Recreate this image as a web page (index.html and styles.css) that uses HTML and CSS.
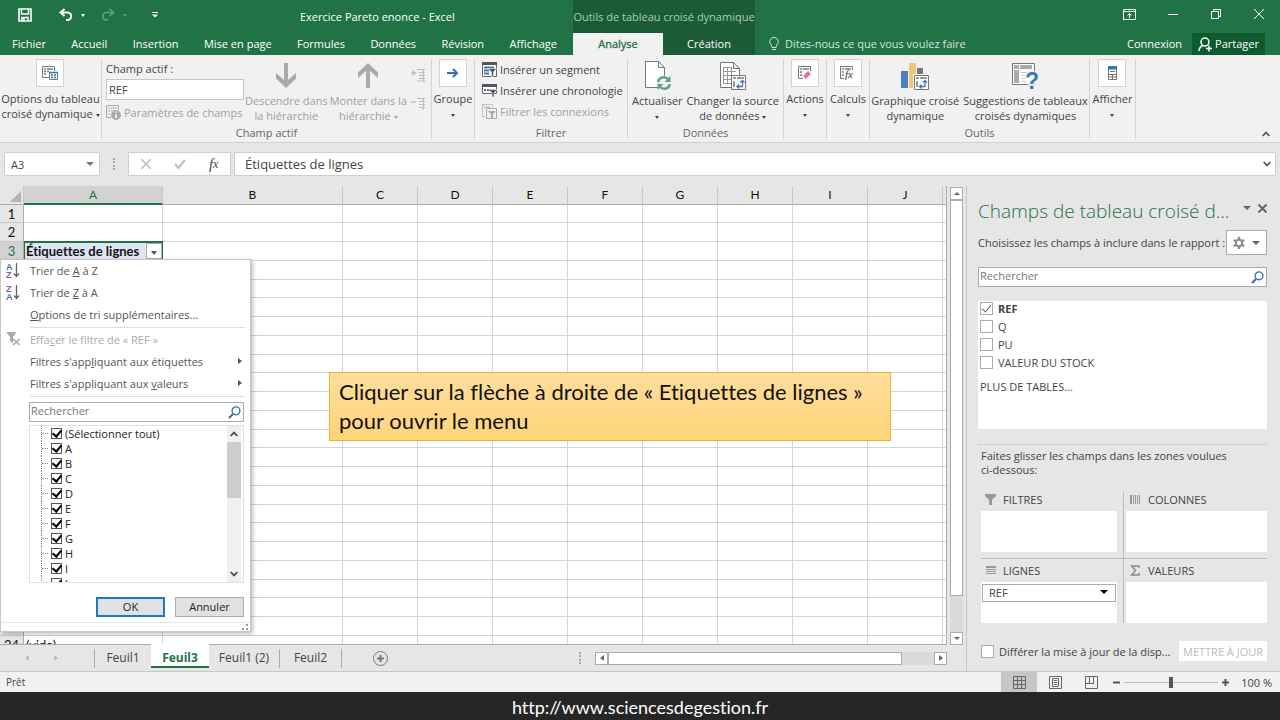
FILE: index.html
```html
<!DOCTYPE html>
<html lang="fr">
<head>
    <meta charset="UTF-8">
    <meta name="viewport" content="width=device-width, initial-scale=1.0">
    <title>Exercice Pareto enonce - Excel</title>
    <link rel="stylesheet" href="styles.css">
</head>
<body>
    <header class="top">
        <div class="titlebar">
            <div class="quick">
                <button class="plain" aria-label="Enregistrer">
                    <svg width="14" height="14" viewBox="0 0 14 14" fill="none" stroke="#fff" stroke-width="1.6"><path d="M1 1h12v12H1zM3.500 1v5h7V1M4 13V9.500h6V13M6 10v3"/></svg>
                </button>
                <button class="plain undo" aria-label="Annuler">
                    <svg width="14" height="14" viewBox="0 0 14 14" fill="none" stroke="#fff" stroke-width="2"><path d="M5.500 1L1.500 4.500l4 3.500M2 4.500h6.500c5 0 5 7.500-.5 7.500H7"/></svg>
                    <i class="caret"></i>
                </button>
                <button class="plain redo" aria-label="Rétablir">
                    <svg width="14" height="14" viewBox="0 0 14 14" fill="none" stroke="#fff" stroke-width="1.6"><path d="M8.500 1l4 3.500-4 3.500M12 4.500H5.500c-5 0-5 7.500.5 7.500H7"/></svg>
                    <i class="caret"></i>
                </button>
                <button class="plain more" aria-label="Personnaliser">
                    <svg width="6" height="6" viewBox="0 0 6 6" fill="#fff"><path d="M0 0h6v1H0zM0 2.500h6L3 5.500z"/></svg>
                </button>
            </div>
            <div class="doc-title">Exercice Pareto enonce - Excel</div>
            <div class="context-title">Outils de tableau croisé dynamique</div>
            <div class="window-buttons">
                <button class="plain" aria-label="Options du ruban">
                    <svg width="13" height="11" viewBox="0 0 13 11" fill="none" stroke="#fff"><path d="M.5.500h12v10H.5zM.5 2.500h12M6.500 9V4.500M4.500 6.500l2-2 2 2"/></svg>
                </button>
                <button class="plain" aria-label="Réduire">
                    <svg width="10" height="10" viewBox="0 0 10 10" stroke="#fff"><path d="M0 5.500h10"/></svg>
                </button>
                <button class="plain" aria-label="Niveau inférieur">
                    <svg width="10" height="10" viewBox="0 0 10 10" fill="none" stroke="#fff"><path d="M.5 2.500h7v7h-7zM2.500 2.500v-2h7v7h-2"/></svg>
                </button>
                <button class="plain" aria-label="Fermer">
                    <svg width="10" height="10" viewBox="0 0 10 10" stroke="#fff"><path d="M0 0l10 10M10 0L0 10"/></svg>
                </button>
            </div>
        </div>
        <nav class="tabs">
            <div class="main-tabs">
                <a href="#">Fichier</a>
                <a href="#">Accueil</a>
                <a href="#">Insertion</a>
                <a href="#">Mise en page</a>
                <a href="#">Formules</a>
                <a href="#">Données</a>
                <a href="#">Révision</a>
                <a href="#">Affichage</a>
            </div>
            <a class="context active" href="#">Analyse</a>
            <a class="context" href="#">Création</a>
            <a class="tell-me" href="#">
                <svg width="10" height="14" viewBox="0 0 10 14" fill="none" stroke="#d3e5da"><path d="M3 10.500C3 8 .8 7.500.8 4.700a4.200 4.200 0 0 1 8.400 0C9.200 7.500 7 8 7 10.500zM3 12.500h4"/></svg>
                Dites-nous ce que vous voulez faire
            </a>
            <a class="login" href="#">Connexion</a>
            <button class="share">
                <svg width="14" height="15" viewBox="0 0 14 15" fill="none" stroke="#fff" stroke-width="1.500"><circle cx="7" cy="5" r="4"/><path d="M1 14c0-3 1.500-4.500 4-5.500M8 11.500h6M11 8.500v6"/></svg>
                Partager
            </button>
        </nav>
    </header>

    <section class="ribbon">
        <div class="group g-options">
            <button class="big">
                <span class="boxed"><svg width="16" height="16" viewBox="0 0 16 16" fill="none" stroke="#777"><path d="M7 12.500H.5v-11h12V6"/><path d="M2 4h2M5 4h6M2 6.500h2M2 9h2M5 6.500h2" stroke-width="1.500"/><path fill="#fff" d="M7.500 7.500h8v7h-8z"/><path stroke="#2e75b6" d="M7 7.500h9M9 10h2M12 10h2M9 12.500h2M12 12.500h2" stroke-width="1.400"/></svg></span>
                <span>Options du tableau<br>croisé dynamique <i class="caret"></i></span>
            </button>
        </div>
        <div class="group g-field">
            <div class="group-body">
                <div class="field-form">
                    <label for="champ">Champ actif :</label>
                    <input id="champ" type="text" value="REF">
                    <button class="small" disabled>
                        <svg width="15" height="15" viewBox="0 0 15 15" fill="none" stroke="#aaa"><path d="M5 12.500H.5V.5h12V5M2 3h2M5 3h6M2 6h2M2 9h2M5 6h2"/><circle cx="10" cy="10" r="4.500" fill="#aaa"/><path stroke="#fff" stroke-width="1.500" d="M10 9v4M10 6.500v1.300"/></svg>
                        Paramètres de champs
                    </button>
                </div>
                <button class="big arrow" disabled>
                    <svg width="20" height="26" viewBox="0 0 20 26" fill="#aaa"><path d="M8 0h4v17l8-7v5.500L10 25 0 15.500V10l8 7z"/></svg>
                    <span>Descendre dans<br>la hiérarchie</span>
                </button>
                <button class="big arrow" disabled>
                    <svg width="20" height="26" viewBox="0 0 20 26" fill="#aaa"><path d="M8 25h4V8l8 7V9.500L10 0 0 9.500V15l8-7z"/></svg>
                    <span>Monter dans la<br>hiérarchie <i class="caret"></i></span>
                </button>
                <div class="expand">
                    <button class="plain" disabled aria-label="Développer"><svg width="14" height="14" viewBox="0 0 14 14" fill="none" stroke="#bbb"><path d="M0 5h5M2.500 2.500v5" stroke-width="1.500"/><path d="M6 1.500h8M8 4.500h6M8 7.500h6M8 10.500h6M6 13h8M12.500 2v11"/></svg></button>
                    <button class="plain" disabled aria-label="Réduire le champ"><svg width="14" height="14" viewBox="0 0 14 14" fill="none" stroke="#bbb"><path d="M0 5h5" stroke-width="1.500"/><path d="M6 1.500h8M8 4.500h6M8 7.500h6M8 10.500h6M12.500 2v11"/></svg></button>
                </div>
            </div>
            <h2>Champ actif</h2>
        </div>
        <div class="group g-narrow">
            <button class="big">
                <span class="boxed"><svg width="12" height="10" viewBox="0 0 12 10" fill="none" stroke="#2e6fba" stroke-width="2"><path d="M0 5h10M6 1l4 4-4 4"/></svg></span>
                <span>Groupe<br><i class="caret"></i></span>
            </button>
        </div>
        <div class="group g-filter">
            <div class="group-body stack">
                <button class="small">
                    <svg width="15" height="15" viewBox="0 0 15 15" fill="none"><path stroke="#666" fill="#fff" d="M.5.500h14v14H.5z"/><path fill="#555" d="M0 0h15v3H0z"/><path stroke="#3f76b5" stroke-width="2" d="M2 5.500h10M2 8.500h5M2 11.500h5"/><path fill="#555" stroke="#fff" stroke-width=".5" d="M6 6.500h8.500L11.500 10v4.500h-2V10z"/></svg>
                    Insérer un segment
                </button>
                <button class="small">
                    <svg width="15" height="15" viewBox="0 0 15 15" fill="none"><path stroke="#666" fill="#fff" d="M.5 2.500h14v8H.5z"/><path fill="#555" d="M0 1h15v3H0z"/><path stroke="#3f76b5" stroke-width="2" d="M2 7h2M5 7h4"/><path fill="#555" stroke="#fff" stroke-width=".5" d="M7 6.500h8L12 10v4h-2v-4z"/></svg>
                    Insérer une chronologie
                </button>
                <button class="small" disabled>
                    <svg width="15" height="15" viewBox="0 0 15 15" fill="none" stroke="#aaa"><path d="M.5.500h10v3M.5.500v12h3" stroke-dasharray="2 1"/><path d="M4.500 4.500h10v10h-10zM2 3h6"/><path fill="#aaa" stroke="none" d="M6 7h8l-3 3v4H9v-4z"/></svg>
                    Filtrer les connexions
                </button>
            </div>
            <h2>Filtrer</h2>
        </div>
        <div class="group g-data">
            <div class="group-body">
                <button class="big tall">
                    <svg width="28" height="30" viewBox="0 0 28 30" fill="none"><path fill="#fff" stroke="#777" d="M2.500.500h13l6 6v20h-19zM15.500.500v6h6"/><circle cx="21" cy="22" r="7.500" fill="#f1f1f1"/><path stroke="#5fa283" stroke-width="2.400" d="M15 21c1-5 7-6.500 10.500-2.500M27 23c-1 5-7 6.500-10.500 2.500"/><path fill="#5fa283" d="M27.500 15v6h-6zM14.500 29v-6h6z"/></svg>
                    <span>Actualiser<br><i class="caret"></i></span>
                </button>
                <button class="big tall">
                    <svg width="28" height="30" viewBox="0 0 28 30" fill="none"><path fill="#fff" stroke="#777" d="M1.500 1.500h13l6 6v19h-19zM14.500 1.500v6h6"/><path stroke="#999" d="M4.500 6v17M8.500 6v17M12.500 6v17M4 6.500h9M4 10.500h13M4 14.500h13M4 18.500h9M4 22.500h9"/><path fill="#fff" stroke="#777" d="M12.500 14.500h14v14h-14z"/><path stroke="#999" stroke-width="2" d="M14 17h3M18 17h7M15 20v6"/><path stroke="#3d78bd" stroke-width="1.300" d="M18.500 25.500h5v-6M21 21.500l2.500-2 2 2M20 23.500l-2 2 2 2"/></svg>
                    <span>Changer la source<br>de données <i class="caret"></i></span>
                </button>
            </div>
            <h2>Données</h2>
        </div>
        <div class="group g-narrow">
            <button class="big">
                <span class="boxed"><svg width="14" height="14" viewBox="0 0 14 14" fill="none" stroke="#777"><path d="M5 12.500H.5V.5h12V5"/><path d="M2 3h2M5 3h6M2 6h2M2 9h2" stroke-width="1.500"/><path stroke="#e8718d" stroke-width="4" d="M6.500 11.500l5-5"/></svg></span>
                <span>Actions<br><i class="caret"></i></span>
            </button>
        </div>
        <div class="group g-narrow">
            <button class="big">
                <span class="boxed"><svg class="icon-fx" width="15" height="17" viewBox="0 0 15 17" fill="none" stroke="#777"><path d="M4 13.500H.5v-12h12V5"/><path d="M2 4h2M5 4h6M2 7h2M2 10h2" stroke-width="1.500"/><text x="5" y="13">fx</text></svg></span>
                <span>Calculs<br><i class="caret"></i></span>
            </button>
        </div>
        <div class="group g-tools">
            <div class="group-body">
                <button class="big tall">
                    <svg width="30" height="30" viewBox="0 0 30 30" fill="none"><path fill="#4a80bd" d="M1 10h7v17H1z"/><path fill="#edc67a" d="M9 2h7v25H9z"/><path fill="#777" d="M17 7h6v20h-6z"/><path fill="#fff" stroke="#f1f1f1" stroke-width="3" d="M14.500 14.500h14v14h-14z"/><path fill="#fff" stroke="#777" d="M14.500 14.500h14v14h-14z"/><path stroke="#999" stroke-width="2" d="M16 17h3M20 17h7M17 20v6"/><path stroke="#3d78bd" stroke-width="1.300" d="M20 25.500h5v-6M22.500 21.500l2.500-2 2 2M21.500 23.500l-2 2 2 2"/></svg>
                    <span>Graphique croisé<br>dynamique</span>
                </button>
                <button class="big tall">
                    <svg class="icon-help" width="28" height="30" viewBox="0 0 28 30" fill="none"><path fill="#fff" stroke="#777" d="M1.500 2.500h22v21h-22z"/><path fill="#aaa" d="M3 4h5v4H3zM9 4h12v4H9zM3 9h5v13H3z"/><path stroke="#ccc" d="M10 11.500h11M10 14.500h6M10 17.500h6M10 20.500h6"/><text x="14" y="28">?</text></svg>
                    <span>Suggestions de tableaux<br>croisés dynamiques</span>
                </button>
            </div>
            <h2>Outils</h2>
        </div>
        <div class="group g-narrow g-show">
            <button class="big">
                <span class="boxed"><svg width="9" height="14" viewBox="0 0 9 14" fill="none" stroke="#777"><path fill="#fff" d="M.5.500h8v13h-8zM.5 8.500h8M4.500 8v5M1 11h7M2 5.500h5"/><path fill="#2e75b6" stroke="none" d="M0 0h9v3.500H0z"/></svg></span>
                <span>Afficher<br><i class="caret"></i></span>
            </button>
        </div>
        <button class="plain collapse" aria-label="Réduire le ruban">
            <svg width="8" height="6" viewBox="0 0 8 6" fill="none" stroke="#555" stroke-width="1.800"><path d="M.7 5L4 1.500 7.300 5"/></svg>
        </button>
    </section>

    <section class="formula-bar">
        <div class="name-box">
            <input type="text" value="A3" aria-label="Zone Nom">
            <i class="caret large"></i>
        </div>
        <span class="grip"></span>
        <div class="formula-buttons">
            <button class="plain" aria-label="Annuler la saisie"><svg width="10" height="10" viewBox="0 0 10 10" stroke="#bbb" stroke-width="1.500"><path d="M0 0l10 10M10 0L0 10"/></svg></button>
            <button class="plain" aria-label="Entrer"><svg width="12" height="10" viewBox="0 0 12 10" fill="none" stroke="#bbb" stroke-width="2"><path d="M1 5l3.500 4L11 1"/></svg></button>
            <button class="plain fx"><i>f</i>x</button>
        </div>
        <div class="formula-input">
            <input type="text" value="Étiquettes de lignes" aria-label="Barre de formule">
            <svg width="8" height="6" viewBox="0 0 8 6" fill="none" stroke="#555" stroke-width="1.800"><path d="M.7 1L4 4.500 7.300 1"/></svg>
        </div>
    </section>

    <main class="workspace">
        <section class="book">
            <div class="sheet-area">
                <div class="sheet">
                    <table>
                        <colgroup>
                            <col class="col-head"><col class="col-a"><col class="col-b">
                            <col span="9" class="col-std">
                        </colgroup>
                        <thead>
                            <tr>
                                <th class="corner"><svg width="11" height="11" viewBox="0 0 11 11" fill="#b5b5b5"><path d="M11 0v11H0z"/></svg></th>
                                <th class="selected">A</th><th>B</th><th>C</th><th>D</th><th>E</th><th>F</th><th>G</th><th>H</th><th>I</th><th>J</th><th></th>
                            </tr>
                        </thead>
                        <tbody id="rows"></tbody>
                    </table>
                </div>
                <div class="vscroll">
                    <button class="scroll-btn" aria-label="Haut"><i class="caret up"></i></button>
                    <div class="thumb"></div>
                    <div class="track"></div>
                    <button class="scroll-btn" aria-label="Bas"><i class="caret"></i></button>
                </div>
            </div>
            <div class="sheet-tabs">
                <div class="sheet-nav">
                    <i class="caret left"></i>
                    <i class="caret right"></i>
                </div>
                <a href="#">Feuil1</a>
                <a class="active" href="#">Feuil3</a>
                <a class="ruled" href="#">Feuil1 (2)</a>
                <a class="ruled" href="#">Feuil2</a>
                <button class="plain add" aria-label="Nouvelle feuille">
                    <svg width="15" height="15" viewBox="0 0 15 15" fill="none" stroke="#777"><circle cx="7.500" cy="7.500" r="7"/><path stroke-width="2" d="M7.500 4v7M4 7.500h7"/></svg>
                </button>
                <span class="grip"></span>
                <div class="hscroll">
                    <button class="scroll-btn" aria-label="Gauche"><i class="caret left"></i></button>
                    <div class="thumb"></div>
                    <div class="track"></div>
                    <button class="scroll-btn" aria-label="Droite"><i class="caret right"></i></button>
                </div>
            </div>

            <div class="filter-menu">
                <button class="item">
                    <svg width="14" height="17" viewBox="0 0 14 17" fill="none"><text class="az-a" x="0" y="8">A</text><text class="az-z" x="0" y="16">Z</text><path stroke="#666" stroke-width="1.300" d="M10.500 1v13M8 11.500l2.500 3 2.500-3"/></svg>
                    <span>Trier de <u>A</u> à Z</span>
                </button>
                <button class="item">
                    <svg width="14" height="17" viewBox="0 0 14 17" fill="none"><text class="az-z" x="0" y="8">Z</text><text class="az-a" x="0" y="16">A</text><path stroke="#666" stroke-width="1.300" d="M10.500 1v13M8 11.500l2.500 3 2.500-3"/></svg>
                    <span>Trier de <u>Z</u> à A</span>
                </button>
                <button class="item"><span><u>O</u>ptions de tri supplémentaires...</span></button>
                <hr>
                <button class="item" disabled>
                    <svg width="14" height="14" viewBox="0 0 14 14" fill="#aaa"><path d="M0 0h10.500L7 5v6L4 9V5z"/><path stroke="#aaa" stroke-width="1.600" d="M7 7l6.500 6M13.500 7L7 13"/></svg>
                    <span>Effa<u>c</u>er le filtre de « REF »</span>
                </button>
                <button class="item"><span>Filtres s'app<u>l</u>iquant aux étiquettes</span><i class="caret right"></i></button>
                <button class="item"><span>Filtres s'appliquant aux <u>v</u>aleurs</span><i class="caret right"></i></button>
                <hr>
                <div class="search">
                    <input type="text" placeholder="Rechercher" aria-label="Rechercher un élément">
                    <svg width="13" height="13" viewBox="0 0 13 13" fill="none" stroke="#3c72b3"><circle cx="8" cy="4.800" r="3.900" stroke-width="1.400"/><path stroke-width="2.200" d="M5 8l-4 4"/></svg>
                </div>
                <div class="tree">
                    <div class="tree-items">
                        <label><input type="checkbox" checked>(Sélectionner tout)</label>
                        <label><input type="checkbox" checked>A</label>
                        <label><input type="checkbox" checked>B</label>
                        <label><input type="checkbox" checked>C</label>
                        <label><input type="checkbox" checked>D</label>
                        <label><input type="checkbox" checked>E</label>
                        <label><input type="checkbox" checked>F</label>
                        <label><input type="checkbox" checked>G</label>
                        <label><input type="checkbox" checked>H</label>
                        <label><input type="checkbox" checked>I</label>
                        <label><input type="checkbox" checked>J</label>
                    </div>
                    <div class="tree-scroll">
                        <svg width="8" height="6" viewBox="0 0 8 6" fill="none" stroke="#444" stroke-width="1.800"><path d="M.7 5L4 1.500 7.300 5"/></svg>
                        <div class="tree-thumb"></div>
                        <svg width="8" height="6" viewBox="0 0 8 6" fill="none" stroke="#444" stroke-width="1.800"><path d="M.7 1L4 4.500 7.300 1"/></svg>
                    </div>
                </div>
                <div class="menu-buttons">
                    <button class="ok">OK</button>
                    <button>Annuler</button>
                </div>
                <div class="resize">
                    <svg width="6" height="6" viewBox="0 0 6 6" fill="#999"><path d="M4 0h2v2H4zM4 4h2v2H4zM0 4h2v2H0z"/></svg>
                </div>
            </div>

            <p class="callout">Cliquer sur la flèche à droite de « Etiquettes de lignes » pour ouvrir le menu</p>
        </section>

        <aside class="pane">
            <div class="pane-title">
                <h1>Champs de tableau croisé d...</h1>
                <i class="caret large"></i>
                <button class="plain" aria-label="Fermer le volet"><svg width="9" height="9" viewBox="0 0 9 9" stroke="#666" stroke-width="2"><path d="M.5.500l8 8M8.500.500l-8 8"/></svg></button>
            </div>
            <div class="pane-intro">
                <span>Choisissez les champs à inclure dans le rapport :</span>
                <button class="gear" aria-label="Outils">
                    <svg width="12" height="12" viewBox="0 0 12 12" fill="none" stroke="#888"><circle cx="6" cy="6" r="3.200" stroke-width="2"/><path stroke-width="2.400" d="M6 0v2M6 10v2M.8 3l1.800 1M9.400 8l1.800 1M.8 9l1.800-1M9.400 4l1.800-1"/></svg>
                    <i class="caret large"></i>
                </button>
            </div>
            <div class="search">
                <input type="text" placeholder="Rechercher" aria-label="Rechercher un champ">
                <svg width="13" height="13" viewBox="0 0 13 13" fill="none" stroke="#3c72b3"><circle cx="8" cy="4.800" r="3.900" stroke-width="1.400"/><path stroke-width="2.200" d="M5 8l-4 4"/></svg>
            </div>
            <div class="fields">
                <label class="on"><input type="checkbox" checked>REF</label>
                <label><input type="checkbox">Q</label>
                <label><input type="checkbox">PU</label>
                <label><input type="checkbox">VALEUR DU STOCK</label>
                <a href="#">PLUS DE TABLES...</a>
            </div>
            <p class="zones-intro">Faites glisser les champs dans les zones voulues<br>ci-dessous:</p>
            <div class="zones">
                <div class="zone">
                    <h3><svg width="12" height="11" viewBox="0 0 12 11" fill="#999"><path d="M0 0h11v2L7 6v5H4V6L0 2z"/></svg>FILTRES</h3>
                    <div class="drop"></div>
                </div>
                <div class="zone">
                    <h3><svg width="12" height="11" viewBox="0 0 12 11" stroke="#999"><path stroke-width="2" d="M1 1v9"/><path d="M3.500 1v9M5.500 1v9M7.500 1v9M9.500 1v9"/></svg>COLONNES</h3>
                    <div class="drop"></div>
                </div>
                <div class="zone">
                    <h3><svg width="12" height="11" viewBox="0 0 12 11" stroke="#999"><path stroke-width="2" d="M1 2h10"/><path d="M1 4.500h10M1 6.500h10M1 8.500h10"/></svg>LIGNES</h3>
                    <div class="drop"><button class="chip">REF<i class="caret large"></i></button></div>
                </div>
                <div class="zone">
                    <h3><svg width="12" height="11" viewBox="0 0 12 11" fill="none" stroke="#888" stroke-width="1.400"><path d="M9 3V1H1.500l4 4.500-4 4.500H9V8"/></svg>VALEURS</h3>
                    <div class="drop"></div>
                </div>
            </div>
            <div class="defer">
                <label><input type="checkbox">Différer la mise à jour de la disp...</label>
                <button disabled>METTRE À JOUR</button>
            </div>
        </aside>
    </main>

    <div class="status">
        <span class="ready">Prêt</span>
        <button class="view current" aria-label="Normal"><svg width="13" height="13" viewBox="0 0 13 13" fill="none" stroke="#666"><path d="M.5.500h12v12H.5zM4.500 0v13M8.500 0v13M0 4.500h13M0 8.500h13"/></svg></button>
        <button class="view" aria-label="Mise en page"><svg width="13" height="13" viewBox="0 0 13 13" fill="none" stroke="#666"><path d="M.5.500h12v12H.5zM3.500 2.500h6v8h-6zM5 4.500h3M5 6.500h3M5 8.500h3"/></svg></button>
        <button class="view" aria-label="Sauts de page"><svg width="13" height="13" viewBox="0 0 13 13" fill="none" stroke="#666"><path d="M.5.500h12v12H.5zM4.500 0v7M8.500 0v7M1 7.500h8"/></svg></button>
        <button class="plain zoom" aria-label="Zoom arrière"><svg width="7" height="7" viewBox="0 0 7 7" stroke="#555" stroke-width="2"><path d="M0 3.500h7"/></svg></button>
        <input type="range" min="0" max="100" value="50" aria-label="Zoom">
        <button class="plain zoom" aria-label="Zoom avant"><svg width="7" height="7" viewBox="0 0 7 7" stroke="#555" stroke-width="2"><path d="M0 3.500h7M3.500 0v7"/></svg></button>
        <span class="percent">100 %</span>
    </div>

    <footer>http://www.sciencesdegestion.fr</footer>

    <script>
        const rows = document.getElementById('rows');

        for (let i = 1; i <= 24; i++) {
            let first = '<td></td>';
            if (i === 3) {
                first = '<td class="active-cell"><div>Étiquettes de lignes<button aria-label="Filtrer"><i class="caret"></i></button></div></td>';
            }
            if (i === 24) {
                first = '<td>(vide)</td>';
            }
            rows.innerHTML += `<tr><th${i === 3 ? ' class="selected"' : ''}>${i}</th>${first}${'<td></td>'.repeat(10)}</tr>`;
        }
    </script>
</body>
</html>
```

FILE: styles.css
```css
* {
    box-sizing: border-box;
}

body {
    margin: 0;
    height: 100vh;
    display: flex;
    flex-direction: column;
    font-family: "Open Sans", "Noto Sans", sans-serif;
    font-size: 11px;
    line-height: 15px;
    color: #444;
    background: #e6e6e6;
    overflow: hidden;
}

button,
input {
    font: inherit;
    color: inherit;
}

button {
    padding: 0;
    border: 0;
    background: none;
}

a {
    color: inherit;
    text-decoration: none;
}

svg {
    flex: none;
    display: block;
}

h1, h2, h3, p {
    margin: 0;
    font-weight: normal;
}

.plain {
    display: flex;
    align-items: center;
    justify-content: center;
}

.caret {
    display: inline-block;
    flex: none;
    border: 2px solid transparent;
    border-top: 3px solid currentColor;
    border-bottom: 0;
    vertical-align: middle;
}

.caret.large {
    border-width: 4px 4px 0;
}

.caret.up {
    border-top: 0;
    border-bottom: 3px solid currentColor;
}

.caret.left {
    border: 3px solid transparent;
    border-left: 0;
    border-right: 4px solid currentColor;
}

.caret.right {
    border: 3px solid transparent;
    border-right: 0;
    border-left: 4px solid currentColor;
}

/* title bar */

.top {
    flex: none;
    background: #217346;
    color: #fff;
}

.titlebar {
    display: flex;
    height: 33px;
    align-items: center;
}

.quick {
    display: flex;
    align-items: center;
    align-self: flex-start;
    width: 300px;
    height: 30px;
    padding-left: 18px;
}

.undo {
    margin-left: 27px;
    gap: 8px;
}

.redo {
    margin-left: 16px;
    gap: 8px;
    opacity: 0.3;
}

.more {
    margin-left: 25px;
}

.doc-title {
    width: 273px;
}

.context-title {
    width: 182px;
    height: 33px;
    line-height: 33px;
    text-align: center;
    white-space: nowrap;
    background: #1b5c37;
    color: #a9cdb8;
}

.window-buttons {
    display: flex;
    align-self: flex-start;
    margin-left: auto;
    height: 28px;
}

.window-buttons button {
    width: 43px;
}

.tabs {
    display: flex;
    height: 22px;
    line-height: 22px;
}

.main-tabs {
    display: flex;
    justify-content: space-between;
    width: 573px;
    padding: 0 16px 0 12px;
}

.context {
    width: 90px;
    text-align: center;
    background: #1b5c37;
}

.context + .context {
    width: 92px;
}

.context.active {
    background: #f1f1f1;
    color: #217346;
    -webkit-text-stroke: 0.3px #217346;
}

.tell-me {
    display: flex;
    align-items: center;
    gap: 6px;
    margin-left: 14px;
    color: #d3e5da;
}

.login {
    margin-left: auto;
}

.share {
    display: flex;
    align-items: center;
    gap: 3px;
    margin: 0 15px 0 10px;
    padding: 0 6px;
    background: #0e5a2f;
}

/* ribbon */

.ribbon {
    flex: none;
    display: flex;
    height: 88px;
    padding: 4px 0 3px;
    background: #f1f1f1;
    border-bottom: 1px solid #d2d2d2;
}

.group {
    display: flex;
    flex-direction: column;
    align-items: center;
    border-right: 1px solid #d2d2d2;
}

.group-body {
    flex: 1;
    display: flex;
    justify-content: center;
}

.group h2 {
    font-size: 11px;
    line-height: 12px;
    color: #666;
}

.g-options {
    width: 102px;
}

.g-field {
    width: 330px;
}

.g-narrow {
    width: 43px;
}

.g-filter {
    width: 153px;
}

.g-data {
    width: 156px;
}

.g-tools {
    width: 220px;
}

.g-show {
    width: 46px;
}

.big {
    display: flex;
    flex-direction: column;
    align-items: center;
    gap: 4px;
    white-space: nowrap;
}

.big.tall {
    padding: 2px 2px 0;
    gap: 2px;
}

.g-field .group-body {
    justify-content: flex-start;
    width: 100%;
    padding-left: 4px;
}

.arrow {
    padding: 4px 1px 0;
}

.boxed {
    display: flex;
    align-items: center;
    justify-content: center;
    width: 28px;
    height: 28px;
    background: #fff;
    border: 1px solid #d2d2d2;
}

.icon-fx text {
    font-family: "Liberation Serif", serif;
    font-style: italic;
    font-size: 11px;
    fill: #333;
    stroke: none;
}

.icon-help text {
    font-family: "Liberation Sans", sans-serif;
    font-size: 23px;
    font-weight: bold;
    fill: #3d78bd;
    stroke: #f1f1f1;
    stroke-width: 3px;
    paint-order: stroke;
}

.icon-fx,
.icon-help {
    overflow: visible;
}

.ribbon button:disabled {
    color: #a0a0a0;
}

.field-form {
    display: flex;
    flex-direction: column;
    flex: none;
    width: 138px;
    padding-top: 2px;
}

.field-form input {
    width: 138px;
    height: 21px;
    margin: 3px 0 2px;
    padding: 0 2px;
    border: 1px solid #c6c6c6;
    background: #fff;
}

.small {
    display: flex;
    align-items: center;
    gap: 3px;
    height: 21px;
    white-space: nowrap;
}

.stack {
    flex-direction: column;
    justify-content: flex-start;
    width: 100%;
    padding-left: 7px;
}

.expand {
    display: flex;
    flex-direction: column;
    gap: 15px;
    padding: 9px 0 0 3px;
}

.collapse {
    align-self: flex-end;
    margin: 0 10px 2px auto;
}

/* formula bar */

.formula-bar {
    flex: none;
    display: flex;
    height: 43px;
    padding: 9px 4px 10px;
}

.name-box,
.formula-buttons,
.formula-input {
    display: flex;
    align-items: center;
    background: #fff;
    border: 1px solid #cfcfcf;
}

.name-box {
    width: 96px;
    padding-right: 5px;
    color: #777;
}

.formula-bar input {
    flex: 1;
    min-width: 0;
    padding: 0 6px;
    border: 0;
    background: none;
    color: #444;
}

.grip {
    width: 2px;
    height: 12px;
    align-self: center;
    border-left: 2px dotted #aaa;
}

.formula-bar .grip {
    margin: 0 13px;
}

.formula-buttons {
    width: 103px;
    justify-content: space-around;
}

.fx {
    font-family: "Liberation Serif", serif;
    font-style: italic;
    font-size: 12px;
}

.fx i {
    font-size: 15px;
}

.formula-input {
    flex: 1;
    margin-left: 3px;
    padding-right: 4px;
}

.formula-bar .formula-input input {
    padding-left: 10px;
    font-size: 13px;
}

/* sheet */

.workspace {
    flex: 1;
    display: flex;
    min-height: 0;
}

.book {
    position: relative;
    flex: 1;
    display: flex;
    flex-direction: column;
    min-width: 0;
    border-right: 1px solid #c6c6c6;
}

.sheet-area {
    flex: 1;
    display: flex;
    gap: 3px;
    min-height: 0;
    padding-right: 3px;
}

.sheet {
    flex: 1;
    overflow: hidden;
    border-right: 1px solid #ababab;
    border-bottom: 1px solid #ababab;
}

table {
    width: 1018px;
    table-layout: fixed;
    border-collapse: separate;
    border-spacing: 0;
    font-family: Lato, sans-serif;
    font-size: 13px;
    font-variant-ligatures: none;
    color: #111;
}

.col-head {
    width: 24px;
}

.col-a {
    width: 139px;
}

.col-b {
    width: 180px;
}

.col-std {
    width: 75px;
}

tr {
    height: 19px;
}

tbody tr:nth-child(4n + 1) {
    height: 18px;
}

th {
    padding: 0;
    font-weight: normal;
    line-height: 16px;
    background: #e6e6e6;
    border-right: 1px solid #c6c6c6;
    border-bottom: 1px solid #c6c6c6;
}

thead th {
    font-size: 12px;
    border-bottom-color: #ababab;
}

tbody th {
    border-right-color: #ababab;
}

th.selected {
    background: #d2d2d2;
    color: #217346;
}

thead th.selected {
    border-bottom: 2px solid #217346;
}

.corner svg {
    margin: 3px 2px 0 10px;
}

td {
    padding: 0 2px;
    line-height: 16px;
    background: #fff;
    border-right: 1px solid #d4d4d4;
    border-bottom: 1px solid #d4d4d4;
}

.active-cell {
    padding: 0 0 0 1px;
    background: #dde6f2;
    border-right-color: #217346;
    box-shadow: inset 1px 0 #217346, 0 -1px #217346, inset 0 1px #217346;
    font-weight: bold;
}

.active-cell div {
    display: flex;
    align-items: center;
    justify-content: space-between;
    padding-left: 1px;
    white-space: nowrap;
}

.active-cell button {
    width: 16px;
    height: 16px;
    line-height: 10px;
    color: #555;
    background: #fff;
    border: 1px solid #ababab;
}

.active-cell .caret {
    border-width: 4px 3px 0;
}

.vscroll {
    display: flex;
    flex-direction: column;
    width: 13px;
    padding-top: 1px;
}

.scroll-btn {
    flex: none;
    display: flex;
    align-items: center;
    justify-content: center;
    width: 13px;
    height: 13px;
    color: #666;
    background: #fff;
    border: 1px solid #ababab;
}

.vscroll .caret {
    border-left-width: 3px;
    border-right-width: 3px;
}

.thumb {
    flex: 11;
    background: #fff;
    border: 1px solid #ababab;
}

.track {
    flex: 1;
    background: #dadada;
}

.sheet-tabs {
    flex: none;
    display: flex;
    align-items: center;
    height: 26px;
    padding-right: 19px;
    font-size: 12px;
}

.sheet-nav {
    display: flex;
    gap: 25px;
    width: 95px;
    padding-left: 25px;
    color: #bbb;
    border-right: 1px solid #ababab;
}

.sheet-nav,
.sheet-tabs .ruled {
    height: 19px;
    align-items: center;
}

.sheet-tabs a {
    width: 56px;
    line-height: 18px;
    text-align: center;
    white-space: nowrap;
}

.sheet-tabs .active {
    align-self: flex-start;
    width: 58px;
    height: 24px;
    margin-top: -1px;
    line-height: 27px;
    font-weight: bold;
    color: #217346;
    background: #fff;
    border-bottom: 2px solid #217346;
}

.sheet-tabs .ruled {
    width: 71px;
    border-right: 1px solid #ababab;
}

.sheet-tabs .ruled + .ruled {
    width: 62px;
}

.add {
    margin-left: 31px;
}

.sheet-tabs .grip {
    margin-left: auto;
}

.hscroll {
    display: flex;
    width: 352px;
    height: 13px;
    margin-left: 14px;
}

.hscroll .thumb {
    flex: 9;
}

/* filter menu */

.filter-menu {
    position: absolute;
    top: 73px;
    left: 0;
    width: 251px;
    background: #fff;
    border: 1px solid #c6c6c6;
    box-shadow: 2px 2px 4px rgba(0, 0, 0, 0.25);
    color: #555;
}

.item {
    position: relative;
    display: flex;
    align-items: center;
    justify-content: space-between;
    width: 100%;
    height: 22px;
    padding: 0 8px 2px 29px;
}

.item svg {
    position: absolute;
    left: 5px;
}

.item text {
    font-family: "Liberation Sans", sans-serif;
    font-size: 9px;
    font-weight: bold;
}

.az-a {
    fill: #3f76b5;
}

.az-z {
    fill: #8558a8;
}

.item:disabled {
    color: #aaa;
}

.filter-menu hr {
    margin: 1px 5px 1px 29px;
    border: 0;
    border-top: 1px solid #ddd;
}

.search {
    display: flex;
    align-items: center;
    height: 20px;
    padding-right: 2px;
    background: #fff;
    border: 1px solid #ababab;
}

.search input {
    flex: 1;
    min-width: 0;
    padding: 0 1px 3px;
    border: 0;
    outline: 0;
    background: none;
}

.search input::placeholder {
    color: #777;
    opacity: 1;
}

.filter-menu .search {
    margin: 5px 6px 3px 28px;
}

.tree {
    display: flex;
    height: 158px;
    margin: 0 6px 14px 28px;
    border: 1px solid #e0e0e0;
    color: #222;
}

.tree-items {
    flex: 1;
    overflow: hidden;
    padding-left: 11px;
}

.tree label {
    display: flex;
    align-items: center;
    gap: 3px;
    height: 15px;
    line-height: 13px;
    padding-bottom: 1px;
    border-left: 1px dotted #888;
}

.tree label::before {
    content: "";
    width: 6px;
    border-top: 1px dotted #888;
}

input[type="checkbox"] {
    appearance: none;
    flex: none;
    display: flex;
    align-items: center;
    justify-content: center;
    width: 13px;
    height: 13px;
    margin: 0;
    background: #fff;
    border: 1px solid #ababab;
}

input[type="checkbox"]:checked::before {
    content: "";
    width: 4px;
    height: 8px;
    margin-bottom: 2px;
    border: solid #666;
    border-width: 0 1px 1px 0;
    transform: rotate(40deg);
}

.tree input[type="checkbox"] {
    width: 11px;
    height: 11px;
    border-color: #555;
}

.tree input[type="checkbox"]:checked::before {
    height: 7px;
    border-color: #000;
    border-width: 0 2px 2px 0;
}

.tree-scroll {
    display: flex;
    flex-direction: column;
    align-items: center;
    width: 14px;
    margin-right: 2px;
    padding: 5px 0;
    background: #f0f0f0;
}

.tree-thumb {
    width: 14px;
    height: 56px;
    margin: 5px 0 auto;
    background: #cdcdcd;
}

.menu-buttons {
    display: flex;
    justify-content: flex-end;
    gap: 10px;
    margin: 0 6px 5px 0;
    color: #222;
}

.menu-buttons button {
    width: 69px;
    height: 20px;
    line-height: 16px;
    background: #e1e1e1;
    border: 1px solid #ababab;
}

.menu-buttons .ok {
    border: 2px solid #1e78c8;
}

.resize {
    display: flex;
    align-items: flex-end;
    justify-content: flex-end;
    height: 9px;
    padding: 0 2px 1px;
    border-top: 1px solid #dfe6ec;
}

.callout {
    position: absolute;
    top: 186px;
    left: 329px;
    width: 562px;
    padding: 4px 9px 5px;
    font-family: Lato, sans-serif;
    font-size: 22px;
    font-variant-ligatures: none;
    line-height: 29px;
    color: #111;
    background: linear-gradient(#ffdd9c, #ffd479);
    border: 1px solid #e5b63a;
}

/* pivot field pane */

.pane {
    display: flex;
    flex-direction: column;
    flex: none;
    width: 313px;
    padding: 11px 13px 0 11px;
}

.pane-title {
    display: flex;
    align-items: center;
    height: 28px;
    color: #666;
}

.pane-title h1 {
    flex: 1;
    font-size: 19px;
    font-weight: 300;
    line-height: 27px;
    white-space: nowrap;
    color: #217346;
}

.pane-title button {
    margin: 0 0 6px 7px;
}

.pane-title .caret {
    margin-bottom: 6px;
}

.pane-intro {
    display: flex;
    align-items: center;
    justify-content: space-between;
    height: 25px;
    margin: 5px 0 12px;
    white-space: nowrap;
}

.gear {
    display: flex;
    align-items: center;
    justify-content: center;
    gap: 7px;
    width: 41px;
    height: 25px;
    color: #666;
    background: #fff;
    border: 1px solid #ababab;
}

.fields {
    height: 128px;
    margin: 14px 0 15px;
    padding: 1px 2px 0;
    background: #fff;
}

.fields label {
    display: flex;
    align-items: center;
    gap: 5px;
    height: 13px;
    margin-bottom: 5px;
}

.fields .on {
    font-weight: bold;
}

.fields a {
    display: block;
    margin-top: 10px;
}

.zones-intro {
    padding: 4px 3px 15px;
    line-height: 14px;
    border-top: 1px dotted #bbb;
}

.zones {
    display: grid;
    grid-template-columns: 1fr 1fr;
    margin-left: 3px;
}

.zone {
    padding-bottom: 6px;
}

.zone:nth-child(odd) {
    padding-right: 6px;
    border-right: 1px solid #bbb;
}

.zone:nth-child(even) {
    padding-left: 2px;
}

.zone:nth-child(n + 3) {
    padding-bottom: 0;
    border-top: 1px solid #bbb;
}

.zone h3 {
    display: flex;
    align-items: center;
    gap: 6px;
    height: 23px;
    padding: 4px 0 4px 4px;
    font-size: 11px;
}

.zone:nth-child(-n + 2) h3 {
    height: 19px;
    padding-top: 0;
}

.drop {
    height: 41px;
    padding: 2px 1px;
    background: #fff;
}

.chip {
    display: flex;
    align-items: center;
    justify-content: space-between;
    width: 100%;
    height: 18px;
    padding: 0 7px 2px 6px;
    border: 1px solid #ababab;
}

.chip .caret {
    color: #000;
}

.defer {
    display: flex;
    align-items: center;
    justify-content: space-between;
    margin: auto 0 10px 3px;
    white-space: nowrap;
}

.defer label {
    display: flex;
    align-items: center;
    gap: 5px;
}

.defer button {
    width: 88px;
    height: 20px;
    color: #bbb;
    background: #fff;
}

/* status bar */

.status {
    flex: none;
    display: flex;
    align-items: center;
    height: 21px;
    padding: 0 8px 0 6px;
    background: #f1f1f1;
    border-top: 1px solid #c6c6c6;
}

.ready {
    margin-right: auto;
    font-size: 10px;
}

.view {
    display: flex;
    align-items: center;
    justify-content: center;
    width: 36px;
    height: 20px;
}

.view.current {
    background: #c6c6c6;
}

.zoom {
    margin: 0 4px;
}

input[type="range"] {
    appearance: none;
    width: 94px;
    height: 12px;
    margin: 0;
    background: linear-gradient(#bbb, #bbb) center / 100% 1px no-repeat;
}

input[type="range"]::-webkit-slider-thumb {
    appearance: none;
    width: 4px;
    height: 11px;
    background: #555;
}

.percent {
    margin-left: 8px;
}

footer {
    flex: none;
    height: 28px;
    line-height: 30px;
    text-align: center;
    font-family: Lato, sans-serif;
    font-size: 18px;
    font-variant-ligatures: none;
    color: #fff;
    background: #262626;
}
```
